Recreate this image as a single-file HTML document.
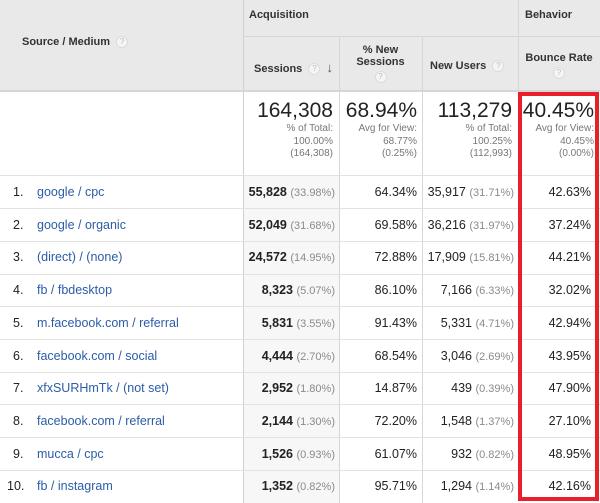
<!DOCTYPE html><html><head><style>
*{margin:0;padding:0;box-sizing:border-box}
body{width:600px;height:503px;overflow:hidden;background:#fff;font-family:"Liberation Sans",Arial,sans-serif;position:relative;color:#222}
.a{position:absolute}
.hd{background:#e9e9e9}
.vl{position:absolute;width:1px;background:#d6d6d6}
.hl{position:absolute;height:1px;background:#e2e2e2;left:0;width:600px}
.h{font-size:11px;font-weight:bold;color:#333;position:absolute}
.q{display:inline-block;width:12px;height:12px;border-radius:50%;background:#f5f5f5;border:1px solid #dcdcdc;color:#bbb;font-size:8px;text-align:center;line-height:10px;font-weight:normal;vertical-align:middle}
.big{font-size:21px;color:#222;text-align:right;position:absolute}
.sm{font-size:10px;color:#777;text-align:right;line-height:12.5px;position:absolute}
.r{position:absolute;font-size:12.5px;white-space:nowrap}
.g{color:#8a8a8a;font-size:11px}
.lk{color:#2b5da8}
</style></head><body>
<div class="a hd" style="left:0;top:0;width:600px;height:91px"></div>
<div class="a" style="left:243px;top:176px;width:96px;height:327px;background:#f7f7f7"></div>
<div class="vl" style="left:243px;top:0;height:503px;background:#d0d0d0"></div>
<div class="vl" style="left:518px;top:0;height:91px"></div>
<div class="vl" style="left:339px;top:36px;height:467px"></div>
<div class="vl" style="left:422px;top:36px;height:467px"></div>
<div class="a" style="left:243px;top:36px;width:357px;height:1px;background:#d6d6d6"></div>
<div class="a" style="left:0;top:90px;width:600px;height:2px;background:#d6d6d6"></div>
<div class="h" style="left:22px;top:36px">Source / Medium &nbsp;<span class="q">?</span></div>
<div class="h" style="left:249px;top:9px">Acquisition</div>
<div class="h" style="left:525px;top:9px">Behavior</div>
<div class="h" style="left:254px;top:60px">Sessions &nbsp;<span class="q">?</span> &nbsp;<span style="font-size:13px;color:#555">&#8595;</span></div>
<div class="h" style="left:339px;top:44px;width:83px;text-align:center;line-height:12px">% New<br>Sessions<br><span class="q" style="margin-top:3px">?</span></div>
<div class="h" style="left:430px;top:60px">New Users &nbsp;<span class="q">?</span></div>
<div class="h" style="left:518px;top:51px;width:82px;text-align:center;line-height:14px">Bounce Rate<br><span class="q" style="margin-top:2px">?</span></div>

<div class="big" style="left:243px;width:90px;top:99px">164,308</div>
<div class="sm" style="left:243px;width:90px;top:123px">% of Total:<br>100.00%<br>(164,308)</div>
<div class="big" style="left:339px;width:78px;top:99px">68.94%</div>
<div class="sm" style="left:339px;width:78px;top:123px">Avg for View:<br>68.77%<br>(0.25%)</div>
<div class="big" style="left:422px;width:90px;top:99px">113,279</div>
<div class="sm" style="left:422px;width:90px;top:123px">% of Total:<br>100.25%<br>(112,993)</div>
<div class="big" style="left:518px;width:76px;top:99px">40.45%</div>
<div class="sm" style="left:518px;width:76px;top:123px">Avg for View:<br>40.45%<br>(0.00%)</div>
<div class="hl" style="top:175px"></div>

<div id="rows"></div>
<script>
var d=[["google / cpc","55,828","33.98%","64.34%","35,917","31.71%","42.63%"],
["google / organic","52,049","31.68%","69.58%","36,216","31.97%","37.24%"],
["(direct) / (none)","24,572","14.95%","72.88%","17,909","15.81%","44.21%"],
["fb / fbdesktop","8,323","5.07%","86.10%","7,166","6.33%","32.02%"],
["m.facebook.com / referral","5,831","3.55%","91.43%","5,331","4.71%","42.94%"],
["facebook.com / social","4,444","2.70%","68.54%","3,046","2.69%","43.95%"],
["xfxSURHmTk / (not set)","2,952","1.80%","14.87%","439","0.39%","47.90%"],
["facebook.com / referral","2,144","1.30%","72.20%","1,548","1.37%","27.10%"],
["mucca / cpc","1,526","0.93%","61.07%","932","0.82%","48.95%"],
["fb / instagram","1,352","0.82%","95.71%","1,294","1.14%","42.16%"]];
var h="";
for(var i=0;i<10;i++){var t=176+i*32.7,c=t+9;var r=d[i];
if(i<9)h+='<div class="hl" style="top:'+(t+32.2)+'px"></div>';
h+='<div class="r" style="left:'+(i==9?7:13)+'px;top:'+c+'px">'+(i+1)+'.</div>';
h+='<div class="r lk" style="left:37px;top:'+c+'px">'+r[0]+'</div>';
h+='<div class="r" style="left:243px;width:92px;text-align:right;top:'+c+'px"><b style="font-weight:bold">'+r[1]+'</b> <span class="g">('+r[2]+')</span></div>';
h+='<div class="r" style="left:339px;width:78px;text-align:right;top:'+c+'px">'+r[3]+'</div>';
h+='<div class="r" style="left:422px;width:92px;text-align:right;top:'+c+'px">'+r[4]+' <span class="g">('+r[5]+')</span></div>';
h+='<div class="r" style="left:518px;width:73px;text-align:right;top:'+c+'px">'+r[6]+'</div>';}
document.getElementById("rows").innerHTML=h;
</script>
<div class="a" style="left:518px;top:92px;width:81px;height:409px;border:4px solid #e8202a"></div>
</body></html>
